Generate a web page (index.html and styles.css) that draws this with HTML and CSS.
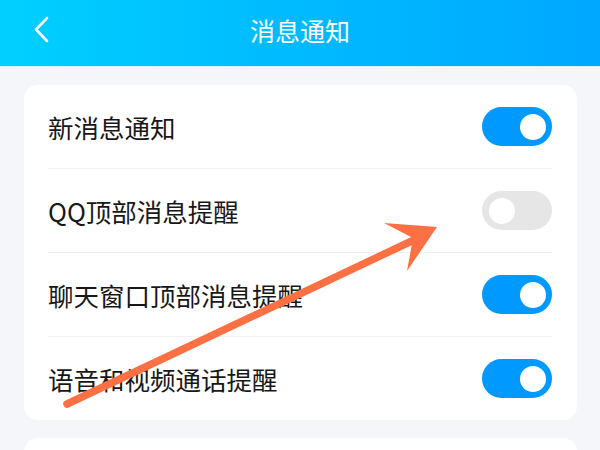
FILE: index.html
```html
<!DOCTYPE html>
<html lang="zh-CN">
<head>
<meta charset="utf-8">
<title>消息通知</title>
<link rel="stylesheet" href="styles.css">
</head>
<body>
<div class="page">
  <header class="topbar">
    <div class="back">
      <svg width="20" height="30" viewBox="0 0 20 30"><polyline points="14,3 3,14.5 14,26" fill="none" stroke="#fff" stroke-width="2.6" stroke-linecap="round" stroke-linejoin="round"/></svg>
    </div>
    <h1 class="title">消息通知</h1>
    <div></div>
  </header>
  <main class="content">
    <section class="card">
      <div class="row"><span class="label">新消息通知</span><span class="switch on"><span class="knob"></span></span></div>
      <div class="row"><span class="label">QQ顶部消息提醒</span><span class="switch off"><span class="knob"></span></span></div>
      <div class="row"><span class="label">聊天窗口顶部消息提醒</span><span class="switch on"><span class="knob"></span></span></div>
      <div class="row last"><span class="label">语音和视频通话提醒</span><span class="switch on"><span class="knob"></span></span></div>
    </section>
    <section class="card second"></section>
  </main>
  <svg class="annot" width="600" height="450" viewBox="0 0 600 450">
    <line x1="67" y1="404" x2="416" y2="239" stroke="#fd7043" stroke-width="7.5" stroke-linecap="round"/>
    <polygon points="437,227 384,223 413,238 407,271" fill="#fd7043"/>
  </svg>
</div>
</body>
</html>
```
FILE: styles.css
```css
* { box-sizing: border-box; }
html, body { margin: 0; padding: 0; }
body {
  font-family: "Noto Sans CJK SC", "Noto Sans", sans-serif;
  background: #f4f6fa;
}
.page {
  position: relative;
  width: 600px;
  height: 450px;
  overflow: hidden;
  background: #f4f6fa;
}
.topbar {
  height: 67px;
  display: grid;
  grid-template-columns: 1fr auto 1fr;
  align-items: center;
  padding-bottom: 6px;
  background: linear-gradient(90deg, #00d0ff 0%, #00bcff 45%, #00a8ff 100%);
  border-bottom: 1px solid #d8f3ff;
}
.back {
  padding-left: 33px;
  display: flex;
  align-items: center;
}
.back svg { display: block; }
.title {
  margin: 0;
  font-size: 25px;
  font-weight: 400;
  color: #fff;
  letter-spacing: 0;
  line-height: 1;
}
.content {
  padding: 18px 23px 0 24px;
  display: flex;
  flex-direction: column;
  gap: 18px;
}
.card {
  background: #fff;
  border-radius: 14px;
  padding: 0 25px 0 24px;
}
.row {
  height: 84px;
  display: flex;
  align-items: center;
  justify-content: space-between;
  border-bottom: 1px solid #f0f1f3;
}
.row.last { border-bottom: none; height: 83px; }
.label {
  font-size: 25.5px;
  color: #171717;
  line-height: 1;
  padding-top: 1px;
}
.switch {
  width: 70px;
  height: 39px;
  border-radius: 20px;
  display: flex;
  align-items: center;
  padding: 0 6px 0 7px;
}
.switch.on { background: #0099ff; justify-content: flex-end; }
.switch.off { background: #e6e6e6; justify-content: flex-start; }
.knob {
  width: 26px;
  height: 26px;
  border-radius: 50%;
  background: #fff;
}
.card.second { height: 60px; }
.annot {
  position: absolute;
  left: 0;
  top: 0;
  pointer-events: none;
}
```
